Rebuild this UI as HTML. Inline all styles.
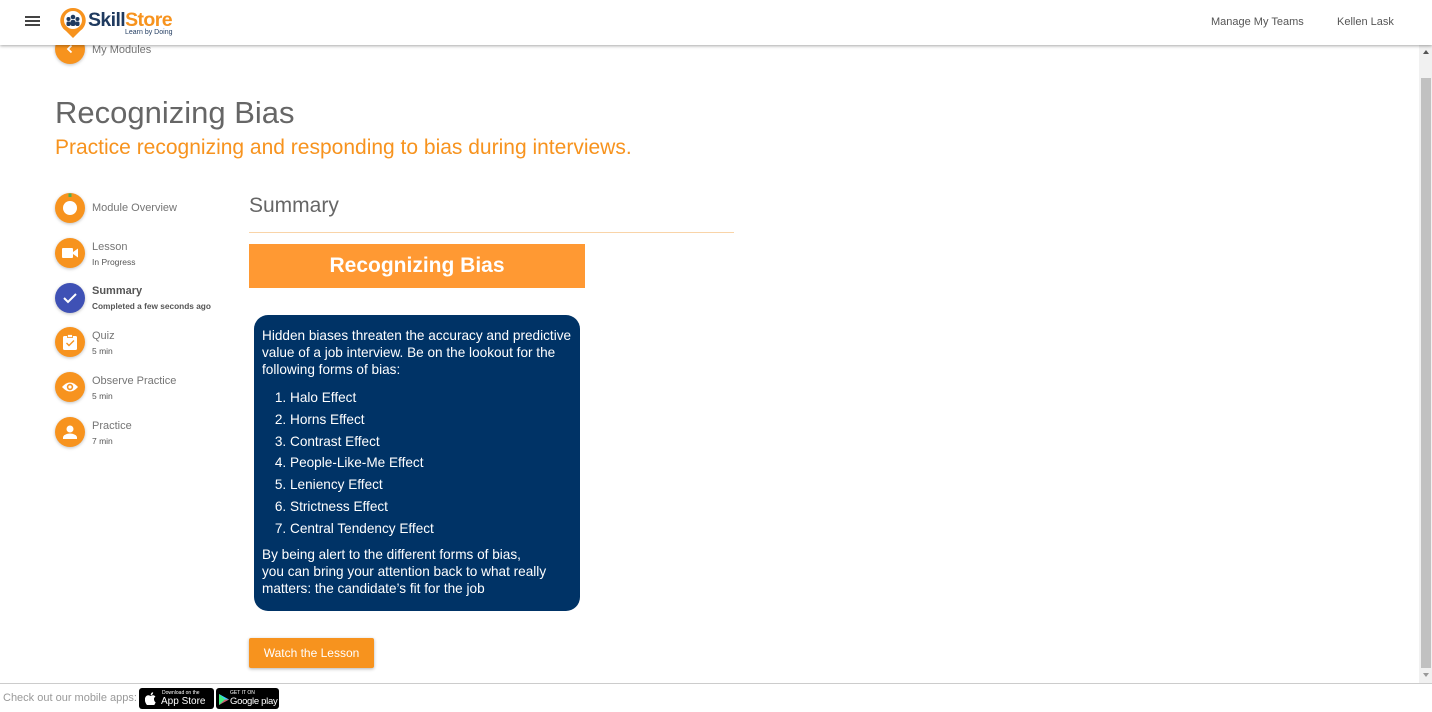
<!DOCTYPE html>
<html><head><meta charset="utf-8"><style>
*{margin:0;padding:0;box-sizing:border-box}
body{width:1432px;height:712px;overflow:hidden;background:#fff;font-family:"Liberation Sans",Arial,sans-serif;position:relative;color:#757575}
.abs{position:absolute;white-space:nowrap}
.hdr{left:0;top:0;width:1432px;height:45px;background:#fff;box-shadow:0 1px 3px rgba(0,0,0,.35);z-index:5}
.circ{width:30px;height:30px;border-radius:50%;background:#f7931e;box-shadow:0 1px 3px rgba(0,0,0,.25);display:flex;align-items:center;justify-content:center}
.st{font-size:11px;color:#757575;left:92px}
.sub{font-size:8.5px;color:#555;margin-top:4px}
.box{left:254px;top:315px;width:326px;height:296px;background:#003366;border-radius:14px;color:#fff;font-size:13.6px;line-height:17px;padding:12px 8px;white-space:normal}
.box ol{margin:9px 0 6px 28px;line-height:21.8px}
</style></head><body>
<div class="abs hdr">
 <div class="abs" style="left:25px;top:16px;width:15px;height:2px;background:#444;box-shadow:0 4px 0 #444,0 8px 0 #444"></div>
 <svg class="abs" style="left:59px;top:7px" width="28" height="32" viewBox="0 0 28 32"><path d="M14 1a12.5 12.5 0 0 1 7 23l-7 7-7-7A12.5 12.5 0 0 1 14 1z" fill="#f7931e"/><circle cx="14" cy="13" r="9" fill="#fff"/><circle cx="14" cy="10" r="2.3" fill="#1f3a5f"/><circle cx="9.5" cy="12" r="2" fill="#1f3a5f"/><circle cx="18.5" cy="12" r="2" fill="#1f3a5f"/><rect x="11.5" y="13" width="5" height="6" rx="2" fill="#1f3a5f"/><rect x="7.5" y="14.5" width="4" height="4.5" rx="1.5" fill="#1f3a5f"/><rect x="16.5" y="14.5" width="4" height="4.5" rx="1.5" fill="#1f3a5f"/></svg>
 <div class="abs" style="left:88px;top:9px;font-size:19.5px;font-weight:bold;letter-spacing:-.6px"><span style="color:#1f3a5f">Skill</span><span style="color:#f7931e">Store</span></div>
 <div class="abs" style="left:125px;top:29px;font-size:7px;color:#1f3a5f">Learn by Doing</div>
 <div class="abs" style="left:1211px;top:16px;font-size:11px;color:#555">Manage My Teams</div>
 <div class="abs" style="left:1337px;top:16px;font-size:11px;color:#555">Kellen Lask</div>
</div>
<div class="abs circ" style="left:55px;top:34px"><svg width="10" height="10" viewBox="0 0 10 10"><path d="M6.5 1.5L3 5l3.5 3.5" stroke="#fff" stroke-width="1.8" fill="none"/></svg></div>
<div class="abs" style="left:92px;top:44px;font-size:11px">My Modules</div>
<div class="abs" style="left:55px;top:95px;font-size:31px;color:#666">Recognizing Bias</div>
<div class="abs" style="left:55px;top:136px;font-size:21px;color:#f7931e">Practice recognizing and responding to bias during interviews.</div>

<div class="abs circ" style="left:55px;top:193px"><svg width="30" height="30"><circle cx="15" cy="15" r="7" fill="#fff"/><path d="M15 0.5v3.5" stroke="#4caf50" stroke-width="3"/></svg></div>
<div class="abs st" style="top:202px">Module Overview</div>
<div class="abs circ" style="left:55px;top:238px"><svg width="16" height="12"><rect x="0" y="1" width="11" height="10" rx="1" fill="#fff"/><path d="M11 5l5-3.5v9L11 7z" fill="#fff"/></svg></div>
<div class="abs st" style="top:241px">Lesson<div class="sub">In Progress</div></div>
<div class="abs circ" style="left:55px;top:283px;background:#3f51b5"><svg width="14" height="12"><path d="M1 6l4 4 8-8" stroke="#fff" stroke-width="2" fill="none"/></svg></div>
<div class="abs st" style="top:285px;color:#555;font-weight:bold">Summary<div class="sub" style="font-weight:bold;color:#555;font-size:8.3px">Completed a few seconds ago</div></div>
<div class="abs circ" style="left:55px;top:327px"><svg width="14" height="16"><rect x="0" y="2" width="14" height="14" rx="1.5" fill="#fff"/><rect x="4.5" y="0.5" width="5" height="3" fill="#fff" stroke="#f7931e" stroke-width=".8"/><path d="M3.5 9l2.5 2.5 5-5" stroke="#f7931e" stroke-width="1.4" fill="none"/></svg></div>
<div class="abs st" style="top:330px">Quiz<div class="sub">5 min</div></div>
<div class="abs circ" style="left:55px;top:372px"><svg width="18" height="12"><path d="M1 6Q9-3 17 6Q9 15 1 6z" fill="#fff"/><circle cx="9" cy="6" r="3.2" fill="#f7931e"/><circle cx="9" cy="6" r="1.6" fill="#fff"/></svg></div>
<div class="abs st" style="top:375px">Observe Practice<div class="sub">5 min</div></div>
<div class="abs circ" style="left:55px;top:417px"><svg width="14" height="14"><circle cx="7" cy="4" r="3.5" fill="#fff"/><path d="M0 14v-1.5C0 10 4 8.5 7 8.5s7 1.5 7 4V14z" fill="#fff"/></svg></div>
<div class="abs st" style="top:420px">Practice<div class="sub">7 min</div></div>

<div class="abs" style="left:249px;top:194px;font-size:21px;color:#666">Summary</div>
<div class="abs" style="left:249px;top:232px;width:485px;height:1px;background:#f9d4a8"></div>
<div class="abs" style="left:249px;top:244px;width:336px;height:44px;background:#ff9933;color:#fff;font-weight:bold;font-size:21px;text-align:center;line-height:44px">Recognizing Bias</div>
<div class="abs box">Hidden biases threaten the accuracy and predictive value of a job interview. Be on the lookout for the following forms of bias:
<ol><li>Halo Effect</li><li>Horns Effect</li><li>Contrast Effect</li><li>People-Like-Me Effect</li><li>Leniency Effect</li><li>Strictness Effect</li><li>Central Tendency Effect</li></ol>
By being alert to the different forms of bias,<br>you can bring your attention back to what really matters: the candidate’s fit for the job</div>
<div class="abs" style="left:249px;top:638px;width:125px;height:30px;background:#f7931e;color:#fff;font-size:12px;text-align:center;line-height:30px;border-radius:2px;box-shadow:0 1px 3px rgba(0,0,0,.3)">Watch the Lesson</div>

<div class="abs" style="left:1419px;top:45px;width:13px;height:638px;background:#f1f1f1"></div>
<div class="abs" style="left:1421px;top:78px;width:10px;height:590px;background:#c1c1c1"></div>
<div class="abs" style="left:1423px;top:50px;width:0;height:0;border-left:3.5px solid transparent;border-right:3.5px solid transparent;border-bottom:4px solid #555"></div>
<div class="abs" style="left:1423px;top:673px;width:0;height:0;border-left:3.5px solid transparent;border-right:3.5px solid transparent;border-top:4px solid #999"></div>

<div class="abs" style="left:0;top:683px;width:1432px;height:1px;background:#ccc"></div>
<div class="abs" style="left:3px;top:692px;font-size:11px;color:#999">Check out our mobile apps:</div>
<div class="abs" style="left:139px;top:688px;width:75px;height:21px;background:#000;border-radius:3px;color:#fff">
 <svg class="abs" style="left:6px;top:4px" width="11" height="13" viewBox="0 0 11 13"><path d="M9 7c0-1.6 1.3-2.3 1.4-2.4-.8-1.1-2-1.3-2.4-1.3-1-.1-2 .6-2.5.6s-1.3-.6-2.2-.6C2.2 3.3 1 4 .4 5.2c-1.2 2.1-.3 5.2.9 6.9.6.8 1.2 1.7 2.1 1.7.8 0 1.2-.5 2.2-.5s1.3.5 2.2.5 1.5-.8 2-1.7c.6-.9.9-1.8.9-1.8S9 9.6 9 7zM7.5 2.2C7.9 1.7 8.2 1 8.1.3c-.6 0-1.4.4-1.8.9-.4.4-.7 1.2-.6 1.8.7.1 1.4-.3 1.8-.8z" fill="#fff"/></svg>
 <div class="abs" style="left:23px;top:2px;font-size:5px">Download on the</div>
 <div class="abs" style="left:22px;top:8px;font-size:10px">App Store</div>
</div>
<div class="abs" style="left:216px;top:688px;width:63px;height:21px;background:#000;border-radius:3px;color:#fff">
 <svg class="abs" style="left:3px;top:6px" width="10" height="11"><path d="M0 0l10 5.5L0 11z" fill="#3bccff"/><path d="M0 0l6 5.5L0 11z" fill="#48ff48" opacity=".7"/><path d="M6 5.5L10 5.5 0 11z" fill="#ff3a44" opacity=".8"/></svg>
 <div class="abs" style="left:14px;top:2px;font-size:5px">GET IT ON</div>
 <div class="abs" style="left:14px;top:8px;font-size:9.5px;letter-spacing:-.3px">Google play</div>
</div>
</body></html>
